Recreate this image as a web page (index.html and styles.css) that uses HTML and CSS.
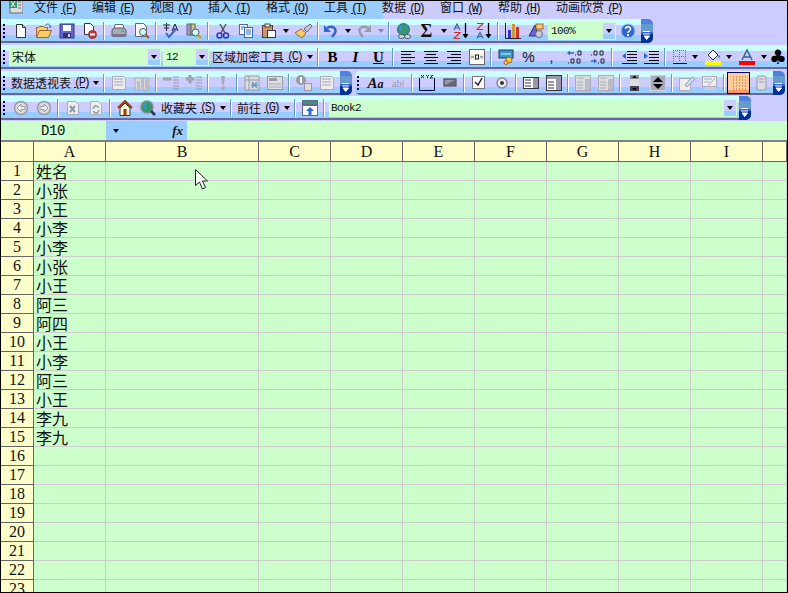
FILE: index.html
```html
<!DOCTYPE html>
<html lang="zh">
<head>
<meta charset="utf-8">
<title>Book2</title>
<link rel="stylesheet" href="styles.css">
</head>
<body>
<svg class="defs" aria-hidden="true">
<symbol id="new" viewBox="0 0 16 16"><path d="M3.5 1.5h6l3 3v10h-9z" fill="#fff" stroke="#334"/><path d="M9.5 1.5v3h3" fill="#ccd" stroke="#334"/></symbol>
<symbol id="open" viewBox="0 0 16 16"><path d="M.5 14.5v-10h2l1-1h4l1 1h3v3" fill="#fc6" stroke="#963"/><path d="M.5 14.5l3-7h12l-3 7z" fill="#ffcc66" stroke="#963"/><path d="M9 2.5c2-2 4-2 5 0l1 1.500-2 0" fill="none" stroke="#369"/></symbol>
<symbol id="save" viewBox="0 0 16 16"><rect x="1" y="1" width="14" height="14" fill="#66c" stroke="#339"/><rect x="4" y="2" width="8" height="6" fill="#fff"/><rect x="4" y="10" width="8" height="5" fill="#336"/><rect x="9" y="11" width="2" height="3" fill="#ccf"/></symbol>
<symbol id="perm" viewBox="0 0 16 16"><path d="M2.500.5h6l3 3v8h-9z" fill="#fff" stroke="#334"/><circle cx="10.500" cy="11.500" r="4" fill="#c33" stroke="#933"/><rect x="8" y="10.500" width="5" height="2" fill="#fff"/></symbol>
<symbol id="print" viewBox="0 0 16 16"><path d="M4 1.500h8l1 5H3z" fill="#fff" stroke="#667"/><path d="M1 7l2-2h10l2 2v6H1z" fill="#aab" stroke="#556"/><rect x="2" y="11" width="12" height="3" fill="#778"/><rect x="10" y="7" width="3" height="2" fill="#3c6"/></symbol>
<symbol id="prev" viewBox="0 0 16 16"><path d="M1.500.5h8l3 3v10h-11z" fill="#fff" stroke="#667"/><circle cx="9" cy="9" r="3.500" fill="#cff" stroke="#555"/><path d="M11.500 11.500l3.500 3.500" stroke="#963" stroke-width="2"/></symbol>
<symbol id="spell" viewBox="0 0 17 16"><path d="M1 2h7M4.500 0v8M2 5h5M10 8l3-7 3 7M11 6h4" fill="none" stroke="#223"/><path d="M4 10l3 4 7-8" fill="none" stroke="#36c" stroke-width="2"/></symbol>
<symbol id="res" viewBox="0 0 16 16"><rect x="1" y="1" width="4" height="11" fill="#99c" stroke="#669"/><rect x="5" y="1" width="4" height="11" fill="#cc9" stroke="#663"/><circle cx="9.500" cy="9.500" r="3.500" fill="#cff" stroke="#556"/><path d="M12 12l3 3" stroke="#c90" stroke-width="2"/></symbol>
<symbol id="cut" viewBox="0 0 16 16"><path d="M5 1l5 9M11 1L6 10" stroke="#556" stroke-width="1.500" fill="none"/><circle cx="4.500" cy="12.500" r="2.500" fill="none" stroke="#33c" stroke-width="1.500"/><circle cx="11" cy="12.500" r="2.500" fill="none" stroke="#33c" stroke-width="1.500"/></symbol>
<symbol id="copy" viewBox="0 0 16 16"><rect x="1.500" y="1.500" width="8" height="10" fill="#fff" stroke="#669"/><rect x="6.500" y="4.500" width="8" height="10" fill="#fff" stroke="#36c"/><path d="M8 7h5M8 9h5M8 11h5M3 4h4M3 6h2" stroke="#36c"/></symbol>
<symbol id="paste" viewBox="0 0 16 16"><rect x="1.500" y="2.500" width="10" height="12" fill="#c96" stroke="#633"/><rect x="4" y="1" width="5" height="3" fill="#eec" stroke="#444"/><rect x="6.500" y="7.500" width="8" height="7" fill="#fff" stroke="#335"/></symbol>
<symbol id="brush" viewBox="0 0 19 16"><path d="M1 10l6-4 5 4-4 5z" fill="#fc6" stroke="#963"/><path d="M10 6l6-5 2 2-5 6z" fill="#ccd" stroke="#667"/></symbol>
<symbol id="undo" viewBox="0 0 16 16"><path d="M4 5c5-3 10 0 8 5l-3 4" fill="none" stroke="#36c" stroke-width="2.500"/><path d="M1 2v7h7z" fill="#36c"/></symbol>
<symbol id="redo" viewBox="0 0 16 16"><path d="M12 5C7 2 2 5 4 10l3 4" fill="none" stroke="#99a" stroke-width="2.500"/><path d="M15 2v7H8z" fill="#99a"/></symbol>
<symbol id="link" viewBox="0 0 16 16"><circle cx="7.500" cy="6.500" r="6" fill="#396" stroke="#369"/><path d="M3 3c3 0 4 2 3 4s-3 1-3-1M9 1c2 2 3 3 1 5" fill="#39c"/><rect x="2.500" y="11.500" width="6" height="4" rx="2" fill="#ccd" stroke="#556"/><rect x="8.500" y="11.500" width="6" height="4" rx="2" fill="#ccd" stroke="#556"/></symbol>
<symbol id="sort" viewBox="0 0 16 16"><path d="M12.500 0v13" stroke="#000" stroke-width="1.300"/><path d="M9.500 11h6l-3 4.500z" fill="#000"/></symbol>
<symbol id="az" viewBox="0 0 16 16"><path d="M1 7l3-6 3 6M2 5h4" fill="none" stroke="#369" stroke-width="1.200"/><path d="M1 9.500h6l-6 6h6" fill="none" stroke="#c33" stroke-width="1.200"/><path d="M12.500 0v13" stroke="#000" stroke-width="1.300"/><path d="M9.500 11h6l-3 4.500z" fill="#000"/></symbol>
<symbol id="za" viewBox="0 0 16 16"><path d="M1 .5h6l-6 6h6" fill="none" stroke="#c33" stroke-width="1.200"/><path d="M1 15.500l3-6 3 6M2 13.500h4" fill="none" stroke="#369" stroke-width="1.200"/><path d="M12.500 0v13" stroke="#000" stroke-width="1.300"/><path d="M9.500 11h6l-3 4.500z" fill="#000"/></symbol>
<symbol id="chart" viewBox="0 0 16 16"><path d="M.5 0v15.500H16" fill="none" stroke="#223"/><rect x="3" y="7" width="3" height="8" fill="#33c"/><rect x="7" y="1" width="3" height="14" fill="#c93"/><rect x="11" y="4" width="3" height="11" fill="#c33"/></symbol>
<symbol id="draw" viewBox="0 0 16 16"><path d="M1 13L7 2l3 11z" fill="#66c" stroke="#336"/><rect x="8" y="1" width="7" height="5" fill="#fc6" stroke="#963"/><circle cx="11" cy="11" r="3.500" fill="#ccd" stroke="#667"/></symbol>
<symbol id="help" viewBox="0 0 16 16"><circle cx="8" cy="8" r="7" fill="#36c" stroke="#9cf"/><path d="M5.500 6c0-3 5-3 5 0 0 2-2.500 2-2.500 4" fill="none" stroke="#fff" stroke-width="1.500"/><rect x="7" y="11" width="2" height="2" fill="#fff"/></symbol>
<symbol id="al" viewBox="0 0 16 16"><path d="M1 2.500h14M1 5.500h10M1 8.500h14M1 11.500h10M1 14.500h14" stroke="#000"/></symbol>
<symbol id="ac" viewBox="0 0 16 16"><path d="M1 2.500h14M3 5.500h10M1 8.500h14M3 11.500h10M1 14.500h14" stroke="#000"/></symbol>
<symbol id="ar" viewBox="0 0 16 16"><path d="M1 2.500h14M5 5.500h10M1 8.500h14M5 11.500h10M1 14.500h14" stroke="#000"/></symbol>
<symbol id="merge" viewBox="0 0 16 16"><rect x=".5" y=".5" width="15" height="15" fill="#fff" stroke="#667"/><rect x="1" y="5" width="14" height="6" fill="#eec"/><path d="M2 8h3M11 8h3" stroke="#36c"/><rect x="6.500" y="6" width="3" height="4" fill="none" stroke="#223"/></symbol>
<symbol id="cur" viewBox="0 0 16 16"><rect x="1" y="1" width="14" height="8" fill="#39c" stroke="#336"/><path d="M3 5h10" stroke="#cff"/><circle cx="11" cy="11" r="3" fill="#fc3" stroke="#963"/><circle cx="8" cy="13.500" r="2" fill="#fc3" stroke="#963"/></symbol>
<symbol id="inc" viewBox="0 0 16 16"><path d="M8 6h1M11 2h3v4h-3zM1 14h1M4 10h3v4H4zM10 10h3v4h-3z" fill="none" stroke="#223"/><path d="M2 4h5" stroke="#36c" stroke-width="1.500"/><path d="M0 4l3-2.500v5z" fill="#36c"/></symbol>
<symbol id="dec" viewBox="0 0 16 16"><path d="M1 6h1M4 2h3v4H4zM10 2h3v4h-3zM8 14h1M11 10h3v4h-3z" fill="none" stroke="#223"/><path d="M1 12h4" stroke="#36c" stroke-width="1.500"/><path d="M7 12l-3-2.500v5z" fill="#36c"/></symbol>
<symbol id="outd" viewBox="0 0 16 16"><path d="M6 2.500h10M6 5.500h10M6 8.500h10M6 11.500h10M1 14.500h15" stroke="#000"/><path d="M1 7l4-3v6z" fill="#36c"/></symbol>
<symbol id="ind" viewBox="0 0 16 16"><path d="M6 2.500h10M6 5.500h10M6 8.500h10M6 11.500h10M1 14.500h15" stroke="#000"/><path d="M5 7L1 4v6z" fill="#36c"/></symbol>
<symbol id="bord" viewBox="0 0 16 16"><path d="M1.500 1v12M7.500 1v12M13.500 1v12M1 1.500h13M1 7.500h13" stroke="#667" stroke-dasharray="1 1"/><path d="M1 14.500h14" stroke="#000"/></symbol>
<symbol id="fill" viewBox="0 0 16 16"><rect y="12" width="16" height="4" fill="#ff0"/><path d="M3 6l5-5 5 5-5 5z" fill="#fff" stroke="#334"/><path d="M13 6l1 4 1-3z" fill="#36c"/></symbol>
<symbol id="fcol" viewBox="0 0 16 16"><rect y="12" width="16" height="4" fill="#f00"/><path d="M3 11l5-10 5 10M5 8h6" fill="none" stroke="#369" stroke-width="1.500"/></symbol>
<symbol id="pv1" viewBox="0 0 16 16"><path d="M1.500 1.500h11l2 2v11h-13z" fill="#eee" stroke="#aab"/><path d="M3 4h9M3 7h9M3 10h9" stroke="#bbc" stroke-width="1.500"/></symbol>
<symbol id="pv2" viewBox="0 0 16 16"><rect x="1" y="3" width="14" height="12" fill="#ddd" stroke="#aab"/><rect x="3" y="6" width="3" height="8" fill="#bbc"/><rect x="7" y="2" width="3" height="12" fill="#bbc"/><rect x="11" y="4" width="3" height="10" fill="#bbc"/></symbol>
<symbol id="hid1" viewBox="0 0 16 16"><path d="M0 3h8v2H0zM10 2h6M10 5h6M10 8h6M10 11h6M10 14h6" stroke="#99a" fill="#aab"/></symbol>
<symbol id="hid2" viewBox="0 0 16 16"><path d="M0 3h3v-3h2v3h3v2H5v3H3V5H0zM10 2h6M10 5h6M10 8h6M10 11h6M10 14h6" stroke="#99a" fill="#aab"/></symbol>
<symbol id="excl" viewBox="0 0 16 16"><path d="M6 1h4l-1 9H7z" fill="#aab"/><circle cx="8" cy="13" r="2" fill="#aab"/></symbol>
<symbol id="pset" viewBox="0 0 16 16"><rect x="1" y="1" width="14" height="14" fill="#ddd" stroke="#99a"/><path d="M5 1v14M1 5h14" stroke="#99a"/><path d="M8 7l5 6M13 7l-5 6M7 10h7" stroke="#69c" stroke-width="1.500"/></symbol>
<symbol id="pfld" viewBox="0 0 16 16"><rect x=".5" y="1.500" width="15" height="13" fill="#ddd" stroke="#99a"/><rect x="2" y="3" width="8" height="3" fill="#99a"/><path d="M2 9h12M2 12h12" stroke="#bbc" stroke-width="1.500"/></symbol>
<symbol id="pinf" viewBox="0 0 16 16"><circle cx="5" cy="5" r="5" fill="#99a"/><rect x="4" y="2" width="2" height="6" fill="#fff"/><rect x="8.500" y="8.500" width="7" height="7" fill="#ddd" stroke="#99a"/></symbol>
<symbol id="xyz" viewBox="0 0 16 16"><path d="M.5 3v12.500h15V3" fill="none" stroke="#003"/><path d="M2 0l3 3M5 0L2 3M7 0l1.500 1.500L10 0M8.500 1.500V3M11 0h3l-3 3h3" fill="none" stroke="#223"/></symbol>
<symbol id="btn" viewBox="0 0 14 16"><rect x="1" y="4" width="12" height="7" fill="#99a" stroke="#333"/><path d="M2 10L12 5v5z" fill="#667"/></symbol>
<symbol id="chk" viewBox="0 0 14 16"><rect x=".5" y="1.500" width="12" height="12" fill="#fff" stroke="#778"/><path d="M3 7l3 3 4-7" fill="none" stroke="#223" stroke-width="1.500"/></symbol>
<symbol id="rad" viewBox="0 0 14 16"><circle cx="7" cy="8" r="5" fill="#eee" stroke="#889" stroke-width="1.500"/><circle cx="7" cy="8" r="2" fill="#334"/></symbol>
<symbol id="lst" viewBox="0 0 16 16"><rect x=".5" y="2.500" width="15" height="11" fill="#fff" stroke="#334"/><rect x="10" y="3" width="5" height="10" fill="#99a"/><path d="M2 5h6M2 8h6M2 11h6" stroke="#334"/></symbol>
<symbol id="cmb" viewBox="0 0 16 16"><rect x=".5" y=".5" width="15" height="15" fill="#fff" stroke="#334"/><rect x="1" y="1" width="14" height="3" fill="#99a"/><rect x="10" y="4" width="5" height="11" fill="#99a"/><path d="M2 7h6M2 10h6M2 13h6" stroke="#334"/></symbol>
<symbol id="glst" viewBox="0 0 16 16"><rect x=".5" y=".5" width="15" height="15" fill="#ddd" stroke="#aab"/><rect x="10" y="4" width="5" height="11" fill="#bbc"/><path d="M2 3h7M2 7h6M2 10h6M2 13h6" stroke="#aab"/></symbol>
<symbol id="scr" viewBox="0 0 10 16"><rect width="9" height="16" fill="#ddd"/><rect width="9" height="4" fill="#889"/><rect y="11" width="9" height="5" fill="#445"/><path d="M2 3l2.500-2.500L7 3zM2 13h5l-2.500 2.500z" fill="#000"/></symbol>
<symbol id="spin" viewBox="0 0 16 16"><rect width="16" height="16" fill="#aab" stroke="#eee"/><path d="M3 7l5-5 5 5zM3 9h10l-5 5z" fill="#000"/></symbol>
<symbol id="prop" viewBox="0 0 16 16"><rect x=".5" y="3.500" width="11" height="12" fill="#eee" stroke="#aab"/><path d="M6 10l7-8 3 2-8 8z" fill="#cde" stroke="#99a"/></symbol>
<symbol id="code" viewBox="0 0 16 16"><rect x=".5" y="1.500" width="14" height="10" fill="#eee" stroke="#aab"/><path d="M2 4h8M2 7h6M6 11l7-8" stroke="#aab"/><rect x="3" y="12" width="10" height="3" fill="#ccd"/></symbol>
<symbol id="grid" viewBox="0 0 16 16"><path d="M2 2h13M2 5h13M2 8h13M2 11h13M2 14h13" stroke="#963" stroke-dasharray="1 2"/></symbol>
<symbol id="rem" viewBox="0 0 12 16"><rect x="1" y="1" width="9" height="14" rx="2" fill="#ddd" stroke="#99a"/><path d="M3 4h5M3 7h5" stroke="#99a"/></symbol>
<symbol id="back" viewBox="0 0 16 16"><circle cx="8" cy="8" r="6.500" fill="#ddd" stroke="#99a" stroke-width="1.500"/><path d="M4 8l4-4v2.500h4v3H8V12z" fill="#eee" stroke="#99a"/></symbol>
<symbol id="fwd" viewBox="0 0 16 16"><circle cx="8" cy="8" r="6.500" fill="#ddd" stroke="#99a" stroke-width="1.500"/><path d="M12 8L8 4v2.500H4v3h4V12z" fill="#eee" stroke="#99a"/></symbol>
<symbol id="stop" viewBox="0 0 14 16"><path d="M1.500 1.500h8l3 3v10h-11z" fill="#eee" stroke="#aab"/><path d="M4 6l5 6M9 6l-5 6" stroke="#89a" stroke-width="2"/></symbol>
<symbol id="ref" viewBox="0 0 14 16"><path d="M1.500 1.500h8l3 3v10h-11z" fill="#eee" stroke="#aab"/><path d="M4.500 9a2.500 2.500 0 0 1 5-1M9.500 10a2.500 2.500 0 0 1-5 1" fill="none" stroke="#89a" stroke-width="1.500"/></symbol>
<symbol id="home" viewBox="0 0 16 16"><path d="M1 8l7-7 7 7" fill="none" stroke="#a30" stroke-width="2"/><path d="M3 8l5-5 5 5v7.500H3z" fill="#ffd" stroke="#333"/><rect x="6.500" y="9" width="3" height="6" fill="#a30"/></symbol>
<symbol id="srch" viewBox="0 0 16 16"><circle cx="7" cy="7" r="6" fill="#396" stroke="#889" stroke-width="1.500"/><path d="M3 4c3-2 5 0 4 3s-3 1-4 0" fill="#39c"/><path d="M11 11l4 4" stroke="#334" stroke-width="2.500"/></symbol>
<symbol id="web" viewBox="0 0 16 16"><rect x=".5" y=".5" width="15" height="15" fill="#fff" stroke="#669"/><rect x="1" y="1" width="14" height="3" fill="#396"/><rect x="1" y="4" width="14" height="2" fill="#669"/><path d="M8 7l4 4H9.500v4h-3v-4H4z" fill="#36c"/></symbol>
<symbol id="chev" viewBox="0 0 8 9"><path d="M0 .5h7M0 3h7M1 5h5.500L3.700 8.500z" stroke="#fff" fill="#fff"/></symbol>
<symbol id="xls" viewBox="0 0 14 16"><rect x="1" y="0" width="13" height="14" fill="#ddd" stroke="#667"/><rect x="0" y="1" width="8" height="8" fill="#396"/><path d="M2 2l4 6M6 2L2 8" stroke="#fff"/><path d="M9 3h3M9 6h3M9 9h3" stroke="#669"/></symbol>
</svg>

<main class="win">
  <nav class="menubar">
    <svg class="logo"><use href="#xls"/></svg>
    <span class="mi">文件<u>(F)</u></span><span class="mi">编辑<u>(E)</u></span><span class="mi">视图<u>(V)</u></span><span class="mi">插入<u>(I)</u></span><span class="mi">格式<u>(O)</u></span><span class="mi">工具<u>(T)</u></span><span class="mi">数据<u>(D)</u></span><span class="mi">窗口<u>(W)</u></span><span class="mi">帮助<u>(H)</u></span><span class="mi">动画欣赏<u>(P)</u></span>
  </nav>

  <div class="band">
    <div class="tb tb1">
      <i class="grip"></i>
      <span class="b"><svg class="ic"><use href="#new"/></svg></span><span class="b"><svg class="ic"><use href="#open"/></svg></span><span class="b"><svg class="ic"><use href="#save"/></svg></span><span class="b"><svg class="ic"><use href="#perm"/></svg></span><i class="sep"></i>
      <span class="b"><svg class="ic"><use href="#print"/></svg></span><span class="b"><svg class="ic"><use href="#prev"/></svg></span><i class="sep"></i>
      <span class="b"><svg class="ic wide"><use href="#spell"/></svg></span><span class="b"><svg class="ic"><use href="#res"/></svg></span><i class="sep"></i>
      <span class="b"><svg class="ic"><use href="#cut"/></svg></span><span class="b"><svg class="ic"><use href="#copy"/></svg></span><span class="b"><svg class="ic"><use href="#paste"/></svg></span><i class="arr"></i>
      <span class="b w25"><svg class="ic wider"><use href="#brush"/></svg></span><i class="sep thin"></i>
      <span class="b w22"><svg class="ic"><use href="#undo"/></svg></span><i class="arr"></i><span class="b w22"><svg class="ic"><use href="#redo"/></svg></span><i class="arr off"></i><i class="sep"></i>
      <span class="b"><svg class="ic"><use href="#link"/></svg></span><span class="b sigma">Σ</span><i class="arr"></i><span class="b"><svg class="ic"><use href="#az"/></svg></span><span class="b"><svg class="ic"><use href="#za"/></svg></span><i class="sep"></i>
      <span class="b"><svg class="ic"><use href="#chart"/></svg></span><span class="b"><svg class="ic"><use href="#draw"/></svg></span>
      <span class="combo zoomc"><span class="val mono">100%</span><i class="drop"></i></span>
      <span class="b"><svg class="ic"><use href="#help"/></svg></span>
      <i class="cap"><svg class="chev"><use href="#chev"/></svg></i>
    </div>
  </div>

  <div class="band">
    <div class="tb tb2">
      <i class="grip"></i>
      <span class="combo fontc"><span class="val">宋体</span><i class="drop"></i></span>
      <span class="combo sizec"><span class="val mono">12</span><i class="drop"></i></span>
      <span class="lbl l-enc">区域加密工具<u>(C)</u><i class="arr"></i></span><i class="sep"></i>
      <span class="b fmt bold">B</span><span class="b fmt ital">I</span><span class="b fmt bold und">U</span><i class="sep"></i>
      <span class="b"><svg class="ic"><use href="#al"/></svg></span><span class="b"><svg class="ic"><use href="#ac"/></svg></span><span class="b"><svg class="ic"><use href="#ar"/></svg></span><span class="b"><svg class="ic"><use href="#merge"/></svg></span><i class="sep"></i>
      <span class="b"><svg class="ic"><use href="#cur"/></svg></span><span class="b pct">%</span><span class="b pct">,</span><span class="b"><svg class="ic"><use href="#inc"/></svg></span><span class="b"><svg class="ic"><use href="#dec"/></svg></span><i class="sep"></i>
      <span class="b w22 ml3"><svg class="ic"><use href="#outd"/></svg></span><span class="b w22"><svg class="ic"><use href="#ind"/></svg></span><i class="sep"></i>
      <span class="b"><svg class="ic"><use href="#bord"/></svg></span><i class="arr n8"></i><span class="b w27"><svg class="ic"><use href="#fill"/></svg></span><i class="arr n6"></i><span class="b w29"><svg class="ic"><use href="#fcol"/></svg></span><i class="arr n6"></i>
      <span class="club">♣</span>
    </div>
  </div>

  <div class="band b3">
    <div class="tb tb3">
      <i class="grip"></i>
      <span class="lbl l-piv">数据透视表<u>(P)</u><i class="arr"></i></span><i class="sep"></i>
      <span class="b"><svg class="ic"><use href="#pv1"/></svg></span><span class="b"><svg class="ic"><use href="#pv2"/></svg></span><i class="sep"></i>
      <span class="b"><svg class="ic"><use href="#hid1"/></svg></span><span class="b"><svg class="ic"><use href="#hid2"/></svg></span><i class="sep"></i>
      <span class="b"><svg class="ic"><use href="#excl"/></svg></span><i class="sep"></i>
      <span class="b"><svg class="ic"><use href="#pset"/></svg></span><span class="b"><svg class="ic"><use href="#pfld"/></svg></span><i class="sep"></i>
      <span class="b"><svg class="ic"><use href="#pinf"/></svg></span><span class="b"><svg class="ic"><use href="#pv1"/></svg></span>
      <i class="cap"><svg class="chev"><use href="#chev"/></svg></i>
    </div>
    <div class="tb tb3b">
      <i class="grip"></i>
      <span class="b aa">A<small>a</small></span><span class="b w22 abl">ab|</span><i class="sep"></i>
      <span class="b"><svg class="ic"><use href="#xyz"/></svg></span><span class="b"><svg class="ic"><use href="#btn"/></svg></span><i class="sep"></i>
      <span class="b"><svg class="ic"><use href="#chk"/></svg></span><span class="b"><svg class="ic"><use href="#rad"/></svg></span><i class="sep"></i>
      <span class="b"><svg class="ic"><use href="#lst"/></svg></span><span class="b"><svg class="ic"><use href="#cmb"/></svg></span><i class="sep"></i>
      <span class="b"><svg class="ic"><use href="#glst"/></svg></span><span class="b"><svg class="ic"><use href="#glst"/></svg></span><i class="sep"></i>
      <span class="b"><svg class="ic"><use href="#scr"/></svg></span><span class="b"><svg class="ic"><use href="#spin"/></svg></span><i class="sep"></i>
      <span class="b"><svg class="ic"><use href="#prop"/></svg></span><span class="b"><svg class="ic"><use href="#code"/></svg></span><i class="sep"></i>
      <span class="b active"><svg class="ic"><use href="#grid"/></svg></span><span class="b"><svg class="ic"><use href="#rem"/></svg></span>
      <i class="cap"><svg class="chev"><use href="#chev"/></svg></i>
    </div>
  </div>

  <div class="band b4">
    <div class="tb tb4">
      <i class="grip"></i>
      <span class="b"><svg class="ic"><use href="#back"/></svg></span><span class="b"><svg class="ic"><use href="#fwd"/></svg></span><i class="sep"></i>
      <span class="b"><svg class="ic"><use href="#stop"/></svg></span><span class="b"><svg class="ic"><use href="#ref"/></svg></span><i class="sep"></i>
      <span class="b"><svg class="ic"><use href="#home"/></svg></span><span class="b"><svg class="ic"><use href="#srch"/></svg></span>
      <span class="lbl l-fav">收藏夹<u>(S)</u><i class="arr"></i></span><i class="sep"></i>
      <span class="lbl l-go">前往<u>(G)</u><i class="arr"></i></span><i class="sep"></i>
      <span class="b"><svg class="ic"><use href="#web"/></svg></span><i class="sep"></i>
      <span class="combo addr"><span class="val mono">Book2</span><i class="drop"></i></span>
      <i class="cap"><svg class="chev"><use href="#chev"/></svg></i>
    </div>
  </div>

  <div class="formula">
    <span class="name">D10</span>
    <span class="fxbox"><i class="arr"></i><em class="fx">fx</em></span>
    <span class="input"></span>
  </div>

  <div class="sheet">
    <table>
      <colgroup><col class="c0"><col class="c1"><col class="c2"><col class="c3"><col class="c3"><col class="c3"><col class="c3"><col class="c3"><col class="c3"><col class="c3"><col class="c4"></colgroup>
      <thead><tr><th></th><th>A</th><th>B</th><th>C</th><th>D</th><th>E</th><th>F</th><th>G</th><th>H</th><th>I</th><th></th></tr></thead>
      <tbody>
        <tr><th>1</th><td>姓名</td><td></td><td></td><td></td><td></td><td></td><td></td><td></td><td></td><td></td></tr>
        <tr><th>2</th><td>小张</td><td></td><td></td><td></td><td></td><td></td><td></td><td></td><td></td><td></td></tr>
        <tr><th>3</th><td>小王</td><td></td><td></td><td></td><td></td><td></td><td></td><td></td><td></td><td></td></tr>
        <tr><th>4</th><td>小李</td><td></td><td></td><td></td><td></td><td></td><td></td><td></td><td></td><td></td></tr>
        <tr><th>5</th><td>小李</td><td></td><td></td><td></td><td></td><td></td><td></td><td></td><td></td><td></td></tr>
        <tr><th>6</th><td>小张</td><td></td><td></td><td></td><td></td><td></td><td></td><td></td><td></td><td></td></tr>
        <tr><th>7</th><td>小王</td><td></td><td></td><td></td><td></td><td></td><td></td><td></td><td></td><td></td></tr>
        <tr><th>8</th><td>阿三</td><td></td><td></td><td></td><td></td><td></td><td></td><td></td><td></td><td></td></tr>
        <tr><th>9</th><td>阿四</td><td></td><td></td><td></td><td></td><td></td><td></td><td></td><td></td><td></td></tr>
        <tr><th>10</th><td>小王</td><td></td><td></td><td></td><td></td><td></td><td></td><td></td><td></td><td></td></tr>
        <tr><th>11</th><td>小李</td><td></td><td></td><td></td><td></td><td></td><td></td><td></td><td></td><td></td></tr>
        <tr><th>12</th><td>阿三</td><td></td><td></td><td></td><td></td><td></td><td></td><td></td><td></td><td></td></tr>
        <tr><th>13</th><td>小王</td><td></td><td></td><td></td><td></td><td></td><td></td><td></td><td></td><td></td></tr>
        <tr><th>14</th><td>李九</td><td></td><td></td><td></td><td></td><td></td><td></td><td></td><td></td><td></td></tr>
        <tr><th>15</th><td>李九</td><td></td><td></td><td></td><td></td><td></td><td></td><td></td><td></td><td></td></tr>
        <tr><th>16</th><td></td><td></td><td></td><td></td><td></td><td></td><td></td><td></td><td></td><td></td></tr>
        <tr><th>17</th><td></td><td></td><td></td><td></td><td></td><td></td><td></td><td></td><td></td><td></td></tr>
        <tr><th>18</th><td></td><td></td><td></td><td></td><td></td><td></td><td></td><td></td><td></td><td></td></tr>
        <tr><th>19</th><td></td><td></td><td></td><td></td><td></td><td></td><td></td><td></td><td></td><td></td></tr>
        <tr><th>20</th><td></td><td></td><td></td><td></td><td></td><td></td><td></td><td></td><td></td><td></td></tr>
        <tr><th>21</th><td></td><td></td><td></td><td></td><td></td><td></td><td></td><td></td><td></td><td></td></tr>
        <tr><th>22</th><td></td><td></td><td></td><td></td><td></td><td></td><td></td><td></td><td></td><td></td></tr>
        <tr><th>23</th><td></td><td></td><td></td><td></td><td></td><td></td><td></td><td></td><td></td><td></td></tr>
      </tbody>
    </table>
    <svg class="cursor" viewBox="0 0 13 21"><path d="M.5.500v16l4-3.500 3 7 3-1.500-3-6.500h5z" fill="#fff" stroke="#222"/></svg>
  </div>
</main>
</body>
</html>
```

FILE: styles.css
```css
* { box-sizing: border-box; }
html, body { margin: 0; padding: 0; background: #ccccff; }
.defs { position: absolute; width: 0; height: 0; }

.win {
  width: 788px; height: 593px; overflow: hidden;
  border: 1px solid #000; background: #ccccff;
  font: 12px/14px "Noto Sans CJK SC", "Liberation Sans", sans-serif;
  color: #111;
  display: flex; flex-direction: column;
}
u { font: 12px/12px "Liberation Mono", monospace; letter-spacing: -2.4px; margin-left: 3px; }

.menubar {
  height: 18px; flex: none; display: flex; align-items: flex-start; overflow: hidden;
  background: linear-gradient(to right, #99ccff 382px, #ccccff 382px);
}
.logo { width: 14px; height: 16px; margin: -2px 0 0 8px; flex: none; }
.mi { width: 58px; flex: none; white-space: nowrap; line-height: 12px; }
.mi:first-of-type { margin-left: 11px; }

.band { height: 26px; flex: none; display: flex; gap: 3px; }
.band.b3, .band.b4 { height: 25px; }

.tb {
  height: 24px; display: flex; align-items: center; flex: none;
  background: linear-gradient(#ccffff 0 6px, #ccccff 6px 16px, #99ccff 16px 22px, #666699 22px 24px);
  border-radius: 0 5px 5px 0;
}
.tb1 { width: 652px; }
.tb2 { width: 786px; border-radius: 0; }
.tb3 { width: 351px; }
.tb3b { width: 430px; border-radius: 5px; }
.tb3b .grip { margin-left: 2px; margin-right: 5px; }
.tb4 { width: 747px; }

.grip {
  width: 2px; height: 14px; margin: 0 4px 0 2px; flex: none;
  background: repeating-linear-gradient(#000066 0 2px, transparent 2px 4px);
}
.b {
  width: 23px; height: 20px; flex: none;
  display: flex; align-items: center; justify-content: center;
}
.w22 { width: 22px; } .w25 { width: 25px; } .w27 { width: 27px; } .w29 { width: 29px; }
.ml3 { margin-left: 3px; }
.ic { width: 16px; height: 16px; }
.ic.wide { width: 17px; } .ic.wider { width: 19px; }
.active {
  background: linear-gradient(#ffcc99 0 17px, #ff9966 17px);
  border: 1px solid #000066; height: 22px;
}
.aa { font: italic bold 15px/20px "Liberation Serif", serif; color: #111; align-items: baseline; }
.aa small { font-size: 12px; }
.abl { font: 11px/20px "Liberation Serif", serif; color: #9999aa; }

.sep {
  width: 6px; height: 18px; flex: none; display: block;
  background: linear-gradient(to right, transparent 2px, #6699cc 2px 3px, #ffffff 3px 4px, transparent 4px);
}
.sep.thin { width: 4px; background: linear-gradient(to right, transparent 1px, #6699cc 1px 2px, #ffffff 2px 3px, transparent 3px); }

.arr { width: 11px; height: 10px; flex: none; display: flex; align-items: center; justify-content: center; }
.arr::before { content: ""; border: 3.5px solid transparent; border-top: 4px solid #000; border-bottom: 0; }
.arr.off::before { border-top-color: #8888aa; }
.arr.n8 { width: 8px; } .arr.n6 { width: 6px; }

.sigma { font: bold 18px/20px "Liberation Serif", serif; }
.fmt { font: bold 15px/20px "Liberation Serif", serif; color: #000; }
.ital { font-style: italic; }
.und { text-decoration: underline; }
.pct { font: 14px/20px "Liberation Sans", sans-serif; color: #111; }

.mono { font: 11px/14px "Liberation Mono", monospace; letter-spacing: -.6px; }
.combo {
  height: 18px; background: #ccffcc; border: 1px solid #ccffcc; flex: none;
  display: flex; align-items: center; justify-content: space-between;
}
.val { padding-left: 2px; line-height: 14px; }
.drop {
  width: 12px; height: 16px; flex: none; display: flex; align-items: center; justify-content: center;
  background: linear-gradient(#ccccff 0 11px, #99ccff 11px);
}
.drop::before { content: ""; border: 3.5px solid transparent; border-top: 4px solid #000; border-bottom: 0; }
.zoomc { width: 68px; margin-left: 1px; }
.fontc { width: 152px; }
.sizec { width: 46px; margin-left: 2px; }
.addr { width: 408px; margin: 0 2px; }
.addr .val { padding-left: 1px; }

.lbl { display: flex; align-items: center; flex: none; white-space: nowrap; height: 20px; }
.lbl .arr { margin-left: auto; }
.l-enc { width: 103px; margin-left: 3px; }
.l-piv { width: 90px; margin-left: 2px; }
.l-fav { width: 69px; padding-left: 2px; }
.l-go { width: 58px; padding-left: 3px; }
.club { font: 20px/20px "DejaVu Sans", sans-serif; color: #000; width: 22px; text-align: right; }

.cap {
  width: 12px; height: 24px; flex: none; margin-left: auto;
  display: flex; align-items: flex-end; justify-content: center; padding-bottom: 3px;
  border-radius: 0 5px 5px 0;
  background: linear-gradient(#4d80e0 0 5px, #6699cc 5px 13px, #3366cc 13px 15px, #003399 15px);
}
.chev { width: 8px; height: 9px; }

.formula { height: 21px; flex: none; display: flex; background: #ccffcc; border-bottom: 2px solid #808080; }
.name { width: 105px; padding-left: 40px; font: 14px/21px "Liberation Mono", monospace; letter-spacing: -.4px; flex: none; }
.fxbox { width: 81px; background: #99ccff; flex: none; display: flex; align-items: center; justify-content: space-between; padding: 0 4px; }
.fx { font: bold italic 13px/19px "Liberation Serif", serif; }
.input { flex: 1; }

.sheet { flex: 1; position: relative; overflow: hidden; }
table { border-collapse: separate; border-spacing: 0; table-layout: fixed; width: 786px; }
.c0 { width: 33px; } .c1 { width: 72px; } .c2 { width: 153px; } .c3 { width: 72px; } .c4 { width: 24px; }
th, td { padding: 0; overflow: hidden; white-space: nowrap; }
th {
  background: #ffffcc; font: 16px/18px "Liberation Serif", serif; font-weight: normal; text-align: center; color: #111;
  border-right: 1px solid #666666; border-bottom: 1px solid #666666;
}
td {
  height: 19px; background: #ccffcc; font: 16px/18px "Noto Sans CJK SC", sans-serif; padding-left: 2px; color: #111;
  border-right: 1px solid #cccccc; border-bottom: 1px solid #cccccc;
}
tbody th { height: 19px; }
thead th { height: 20px; }
.cursor { position: absolute; left: 194px; top: 27px; width: 13px; height: 21px; }
```
